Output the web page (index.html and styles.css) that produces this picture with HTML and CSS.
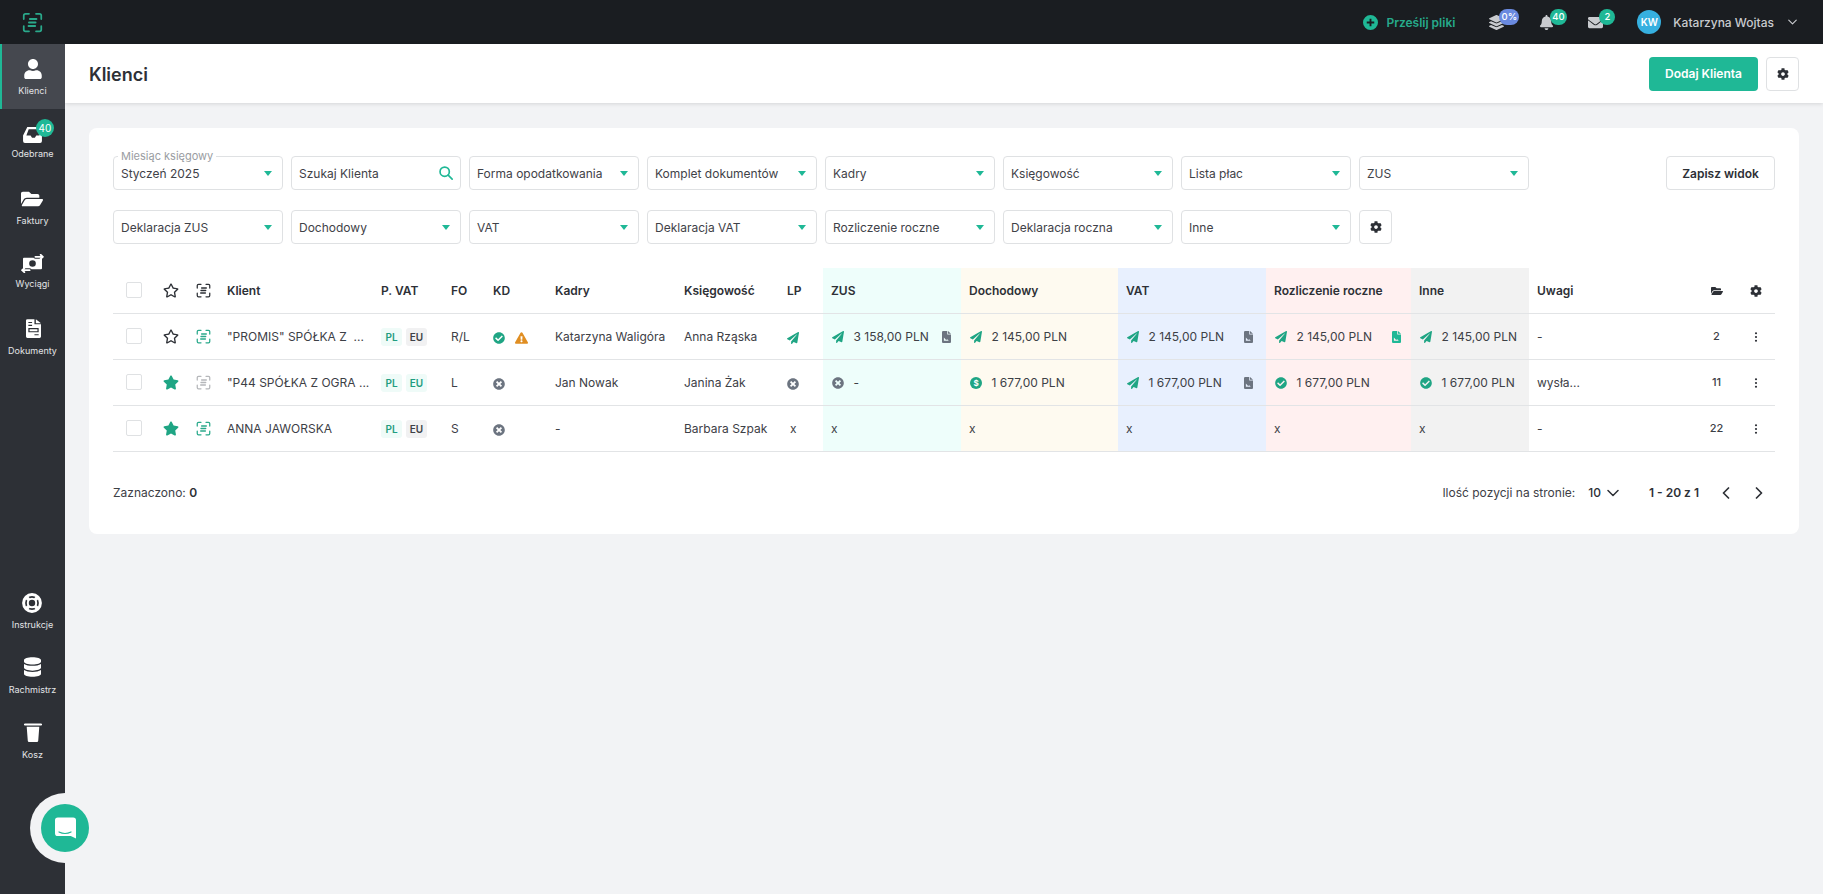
FILE: index.html
```html
<!DOCTYPE html>
<html lang="pl">
<head>
    <meta charset="utf-8">
    <title>Klienci</title>
    <link rel="stylesheet" href="styles.css">
</head>
<body>
    <svg class="sprite">
        <symbol id="i-logo" viewBox="0 0 24 24"><g fill="none" stroke="currentColor" stroke-width="2" stroke-linecap="round"><path d="M2 8V4a2 2 0 0 1 2-2h4M16 2h4a2 2 0 0 1 2 2v4M22 16v4a2 2 0 0 1-2 2h-4M8 22H4a2 2 0 0 1-2-2v-4"/><path stroke-width="2.2" d="M9 8h7.5M8 12h7.5M7.500 16h7.500"/></g></symbol>
        <symbol id="i-user" viewBox="0 0 448 512"><path d="M224 256c70.7 0 128-57.3 128-128S294.7 0 224 0 96 57.3 96 128s57.3 128 128 128zm89.6 32h-16.7c-22.2 10.2-46.9 16-72.9 16s-50.6-5.8-72.9-16h-16.7C60.2 288 0 348.2 0 422.4V464c0 26.5 21.5 48 48 48h352c26.5 0 48-21.500 48-48v-41.600c0-74.200-60.200-134.400-134.400-134.400z"/></symbol>
        <symbol id="i-inbox" viewBox="0 0 20 18"><path fill-rule="evenodd" d="M4.500 1h12l3.500 9v6a2 2 0 0 1-2 2H2a2 2 0 0 1-2-2v-6zM6 3.500L3.500 10h4.500l1.500 2.500h3L14 10h3.500l-2.500-6.500z"/></symbol>
        <symbol id="i-folder" viewBox="0 0 576 512"><path d="M572.694 292.093L500.27 416.248A63.997 63.997 0 0 1 444.989 448H45.025c-18.523 0-30.064-20.093-20.731-36.093l72.424-124.155A64 64 0 0 1 152 256h399.964c18.523 0 30.064 20.093 20.73 36.093zM152 224h328v-48c0-26.51-21.49-48-48-48H272l-64-64H48C21.49 64 0 85.49 0 112v278.046l69.077-118.418C86.214 242.25 117.989 224 152 224z"/></symbol>
        <symbol id="i-money" viewBox="0 0 24 20"><path fill-rule="evenodd" d="M3 4h18a1 1 0 0 1 1 1v10a1 1 0 0 1-1 1H3a1 1 0 0 1-1-1V5a1 1 0 0 1 1-1zM12 6.500a3.500 3.500 0 1 0 0 7 3.500 3.500 0 0 0 0-7z"/><g fill="none" stroke-linecap="round" stroke-linejoin="round"><path stroke="#2d3036" stroke-width="4" d="M15 3h8M1 17h8"/><path stroke="currentColor" stroke-width="1.800" d="M15 3h8M20.500 .8L23 3l-2.500 2.200M1 17h8M3.500 14.800L1 17l2.500 2.200"/></g></symbol>
        <symbol id="i-doc" viewBox="0 0 16 20"><path fill-rule="evenodd" d="M1.500 0H9v5.500h7v13a1.500 1.500 0 0 1-1.500 1.500h-13A1.500 1.500 0 0 1 0 18.500v-17A1.500 1.500 0 0 1 1.500 0zM10.500 0L16 4.300h-5.500zM2.500 3v1.200h4V3zM2.500 6v1.200h4V6zM2.500 9.500v4.500h11V9.500zM3.800 10.800h8.400v2H3.800zM9 16v1.200h4.500V16z"/></symbol>
        <symbol id="i-ring" viewBox="0 0 20 20"><g fill="none" stroke="currentColor"><circle cx="10" cy="10" r="8.400" stroke-width="3"/><circle cx="10" cy="10" r="4.200" stroke-width="2"/><path stroke-width="3.600" d="M4.600 4.600l2.200 2.200M15.400 4.600l-2.200 2.200M4.600 15.400l2.200-2.200M15.400 15.400l-2.200-2.200"/></g></symbol>
        <symbol id="i-db" viewBox="0 0 448 512"><path d="M448 73.143v45.714C448 159.143 347.667 192 224 192S0 159.143 0 118.857V73.143C0 32.857 100.333 0 224 0s224 32.857 224 73.143zM448 176v102.857C448 319.143 347.667 352 224 352S0 319.143 0 278.857V176c48.125 33.143 136.208 48.572 224 48.572S399.874 209.143 448 176zm0 160v102.857C448 479.143 347.667 512 224 512S0 479.143 0 438.857V336c48.125 33.143 136.208 48.572 224 48.572S399.874 369.143 448 336z"/></symbol>
        <symbol id="i-trash" viewBox="0 0 20 22"><path d="M1 1.500h18a1 1 0 0 1 0 2.200H1a1 1 0 0 1 0-2.200zM3 5.200h14l-1.200 15.400a1.500 1.500 0 0 1-1.500 1.400H5.700a1.500 1.500 0 0 1-1.500-1.400z"/></symbol>
        <symbol id="i-chat" viewBox="0 0 22 22"><path d="M3 0h16a3 3 0 0 1 3 3v19l-5.500-2.500H3a3 3 0 0 1-3-3V3a3 3 0 0 1 3-3z"/></symbol>
        <symbol id="i-plus" viewBox="0 0 16 16"><path fill-rule="evenodd" d="M8 0a8 8 0 1 1 0 16A8 8 0 0 1 8 0zM7 4v3H4v2h3v3h2V9h3V7H9V4z"/></symbol>
        <symbol id="i-layers" viewBox="0 0 512 512"><path d="M12.41 148.02l232.94 105.67c6.8 3.09 14.49 3.09 21.29 0l232.94-105.67c16.55-7.51 16.55-32.52 0-40.03L266.65 2.31a25.607 25.607 0 0 0-21.29 0L12.41 107.98c-16.55 7.51-16.55 32.53 0 40.04zm487.18 88.28l-58.09-26.33-161.64 73.27c-7.56 3.43-15.59 5.17-23.86 5.17s-16.29-1.74-23.86-5.17L70.51 209.97l-58.1 26.33c-16.55 7.5-16.55 32.5 0 40l232.94 105.59c6.8 3.08 14.49 3.08 21.29 0L499.59 276.3c16.55-7.5 16.55-32.5 0-40zm0 127.8l-57.87-26.23-161.86 73.37c-7.56 3.43-15.59 5.17-23.86 5.17s-16.29-1.74-23.86-5.17L70.29 337.87 12.41 364.1c-16.55 7.5-16.55 32.5 0 40l232.94 105.59c6.8 3.08 14.49 3.08 21.29 0L499.59 404.1c16.55-7.5 16.55-32.5 0-40z"/></symbol>
        <symbol id="i-bell" viewBox="0 0 448 512"><path d="M224 512c35.32 0 63.97-28.65 63.97-64H160.03c0 35.35 28.65 64 63.97 64zm215.39-149.71c-19.32-20.76-55.47-51.99-55.47-154.29 0-77.7-54.48-139.9-127.94-155.16V32c0-17.67-14.32-32-31.98-32s-31.98 14.33-31.98 32v20.84C118.56 68.1 64.08 130.3 64.08 208c0 102.3-36.15 133.53-55.47 154.29-6 6.45-8.66 14.16-8.61 21.71.11 16.4 12.98 32 32.1 32h383.8c19.12 0 32-15.6 32.1-32 .05-7.55-2.61-15.27-8.61-21.71z"/></symbol>
        <symbol id="i-mail" viewBox="0 0 512 512"><path d="M502.3 190.8c3.9-3.1 9.7-.2 9.7 4.7V400c0 26.5-21.5 48-48 48H48c-26.5 0-48-21.5-48-48V195.6c0-5 5.7-7.8 9.7-4.7 22.4 17.4 52.1 39.5 154.1 113.6 21.1 15.4 56.7 47.8 92.2 47.6 35.7.3 71.2-32.9 92.3-47.6 102-74.1 131.6-96.3 154-113.7zM256 320c23.2.4 56.6-29.2 73.4-41.4 132.7-96.3 142.8-104.7 173.4-128.7 5.8-4.5 9.2-11.5 9.2-18.9v-19c0-26.5-21.5-48-48-48H48C21.5 64 0 85.5 0 112v19c0 7.4 3.4 14.3 9.2 18.9 30.6 23.9 40.7 32.4 173.4 128.7 16.8 12.2 50.2 41.8 73.4 41.4z"/></symbol>
        <symbol id="i-cog" viewBox="0 0 512 512"><path d="M487.4 315.7l-42.6-24.6c4.3-23.2 4.3-47 0-70.2l42.6-24.6c4.9-2.8 7.1-8.6 5.5-14-11.1-35.6-30-67.8-54.7-94.6-3.8-4.1-10-5.1-14.8-2.3L380.8 110c-17.9-15.4-38.5-27.3-60.8-35.1V25.8c0-5.6-3.9-10.5-9.4-11.7-36.7-8.2-74.3-7.8-109.2 0-5.5 1.2-9.4 6.1-9.4 11.7V75c-22.2 7.9-42.8 19.8-60.8 35.1L88.7 85.5c-4.9-2.8-11-1.9-14.8 2.3-24.7 26.7-43.6 58.9-54.7 94.6-1.7 5.4.6 11.2 5.5 14L67.3 221c-4.3 23.2-4.3 47 0 70.2l-42.6 24.6c-4.9 2.8-7.1 8.6-5.5 14 11.1 35.6 30 67.8 54.7 94.6 3.8 4.1 10 5.1 14.8 2.3l42.6-24.6c17.9 15.4 38.5 27.3 60.8 35.1v49.2c0 5.6 3.9 10.5 9.4 11.7 36.7 8.2 74.3 7.8 109.2 0 5.5-1.2 9.4-6.1 9.4-11.7v-49.2c22.2-7.9 42.8-19.8 60.8-35.1l42.6 24.6c4.9 2.8 11 1.9 14.8-2.3 24.7-26.7 43.6-58.9 54.7-94.6 1.5-5.5-.7-11.3-5.6-14.1zM256 336c-44.1 0-80-35.9-80-80s35.9-80 80-80 80 35.9 80 80-35.9 80-80 80z"/></symbol>
        <symbol id="i-star" viewBox="0 0 576 512"><path d="M259.3 17.8L194 150.2 47.9 171.5c-26.2 3.8-36.7 36.1-17.7 54.6l105.7 103-25 145.5c-4.5 26.3 23.2 46 46.4 33.7L288 439.6l130.7 68.7c23.2 12.2 50.9-7.4 46.4-33.7l-25-145.5 105.7-103c19-18.5 8.5-50.8-17.7-54.6L382 150.2 316.7 17.8c-11.7-23.6-45.6-23.9-57.4 0z"/></symbol>
        <symbol id="i-star-o" viewBox="0 0 576 512"><path d="M528.1 171.5L382 150.2 316.7 17.8c-11.7-23.6-45.6-23.9-57.4 0L194 150.2 47.9 171.5c-26.2 3.8-36.7 36.1-17.7 54.6l105.7 103-25 145.5c-4.5 26.3 23.2 46 46.4 33.7L288 439.6l130.7 68.7c23.2 12.2 50.9-7.4 46.4-33.7l-25-145.5 105.7-103c19-18.5 8.5-50.8-17.7-54.6zM388.6 312.3l23.7 138.4L288 385.4l-124.3 65.3 23.7-138.4-100.6-98 139-20.2 62.2-126 62.2 126 139 20.2-100.6 98z"/></symbol>
        <symbol id="i-plane" viewBox="0 0 512 512"><path d="M476 3.2L12.5 270.6c-18.1 10.4-15.8 35.6 2.2 43.2L121 358.4l287.3-253.2c5.5-4.9 13.3 2.6 8.6 8.3L176 407v80.5c0 23.6 28.5 32.9 42.5 15.8L282 426l124.6 52.2c14.2 6 30.4-2.9 33-18.2l72-432C515 7.8 493.3-6.8 476 3.2z"/></symbol>
        <symbol id="i-check" viewBox="0 0 512 512"><path d="M504 256c0 136.967-111.033 248-248 248S8 392.967 8 256 119.033 8 256 8s248 111.033 248 248zM227.314 387.314l184-184c6.248-6.248 6.248-16.379 0-22.627l-22.627-22.627c-6.248-6.249-16.379-6.249-22.628 0L216 308.118l-70.059-70.059c-6.248-6.248-16.379-6.248-22.628 0l-22.627 22.627c-6.248 6.248-6.248 16.379 0 22.627l104 104c6.249 6.249 16.379 6.249 22.628.001z"/></symbol>
        <symbol id="i-times" viewBox="0 0 512 512"><path d="M256 8C119 8 8 119 8 256s111 248 248 248 248-111 248-248S393 8 256 8zm121.6 313.1c4.7 4.7 4.7 12.3 0 17L338 377.6c-4.7 4.7-12.3 4.7-17 0L256 312l-65.1 65.6c-4.7 4.7-12.3 4.7-17 0L134.4 338c-4.7-4.7-4.7-12.3 0-17l65.6-65-65.6-65.1c-4.7-4.7-4.7-12.3 0-17l39.6-39.6c4.7-4.7 12.3-4.7 17 0l65 65.7 65.1-65.6c4.7-4.7 12.3-4.7 17 0l39.6 39.6c4.7 4.7 4.7 12.3 0 17L312 256l65.6 65.1z"/></symbol>
        <symbol id="i-warn" viewBox="0 0 576 512"><path d="M569.517 440.013C587.975 472.007 564.806 512 527.94 512H48.054c-36.937 0-59.999-40.055-41.577-71.987L246.423 23.985c18.467-32.009 64.72-31.951 83.154 0l239.94 416.028zM288 354c-25.405 0-46 20.595-46 46s20.595 46 46 46 46-20.595 46-46-20.595-46-46-46zm-43.673-165.346l7.418 136c.347 6.364 5.609 11.346 11.982 11.346h48.546c6.373 0 11.635-4.982 11.982-11.346l7.418-136c.375-6.874-5.098-12.654-11.982-12.654h-63.383c-6.884 0-12.356 5.78-11.981 12.654z"/></symbol>
        <symbol id="i-file" viewBox="0 0 12 16"><path fill-rule="evenodd" d="M1.500 0H7v4.500h5v10a1.500 1.500 0 0 1-1.500 1.500h-9A1.500 1.500 0 0 1 0 14.500v-13A1.500 1.500 0 0 1 1.500 0zM8 0l4 3.500H8zM2.500 8.500v4.500h6.500l-2-2-1.500 1z"/></symbol>
        <symbol id="i-search" viewBox="0 0 16 16"><g fill="none" stroke="currentColor" stroke-width="1.900" stroke-linecap="round"><circle cx="6.500" cy="6.500" r="5.300"/><path d="M10.500 10.500l4.500 4.500"/></g></symbol>
        <symbol id="i-down" viewBox="0 0 12 8"><path fill="none" stroke="currentColor" stroke-width="1.500" stroke-linecap="round" stroke-linejoin="round" d="M1 1.500l5 5 5-5"/></symbol>
        <symbol id="i-left" viewBox="0 0 8 12"><path fill="none" stroke="currentColor" stroke-width="1.700" stroke-linecap="round" stroke-linejoin="round" d="M6.500 1l-5 5 5 5"/></symbol>
        <symbol id="i-right" viewBox="0 0 8 12"><path fill="none" stroke="currentColor" stroke-width="1.700" stroke-linecap="round" stroke-linejoin="round" d="M1.500 1l5 5-5 5"/></symbol>
        <symbol id="i-dots" viewBox="0 0 4 12"><circle cx="2" cy="1.500" r="1.300"/><circle cx="2" cy="6" r="1.300"/><circle cx="2" cy="10.500" r="1.300"/></symbol>
    </svg>

    <header class="topbar">
        <div class="topbar_logo"><svg class="logo_icon"><use href="#i-logo"/></svg></div>
        <div class="upload"><svg class="upload_icon"><use href="#i-plus"/></svg>Prześlij pliki</div>
        <div class="notify notify_layers"><svg><use href="#i-layers"/></svg><span class="notify_badge badge_blue">0%</span></div>
        <div class="notify notify_bell"><svg><use href="#i-bell"/></svg><span class="notify_badge">40</span></div>
        <div class="notify notify_mail"><svg><use href="#i-mail"/></svg><span class="notify_badge">2</span></div>
        <div class="avatar">KW</div>
        <div class="user_name">Katarzyna Wojtas</div>
        <svg class="user_chevron"><use href="#i-down"/></svg>
    </header>

    <div class="layout">
        <nav class="sidebar">
            <div class="nav_group">
                <a class="nav_item active"><svg class="nav_icon icon_user"><use href="#i-user"/></svg><span>Klienci</span></a>
                <a class="nav_item nav_item_up"><span class="nav_badge">40</span><svg class="nav_icon icon_inbox"><use href="#i-inbox"/></svg><span>Odebrane</span></a>
                <a class="nav_item"><svg class="nav_icon icon_folder"><use href="#i-folder"/></svg><span>Faktury</span></a>
                <a class="nav_item nav_item_up"><svg class="nav_icon icon_money"><use href="#i-money"/></svg><span>Wyciągi</span></a>
                <a class="nav_item"><svg class="nav_icon icon_doc"><use href="#i-doc"/></svg><span>Dokumenty</span></a>
            </div>
            <div class="nav_group">
                <a class="nav_item"><svg class="nav_icon icon_ring"><use href="#i-ring"/></svg><span>Instrukcje</span></a>
                <a class="nav_item"><svg class="nav_icon icon_db"><use href="#i-db"/></svg><span>Rachmistrz</span></a>
                <a class="nav_item"><svg class="nav_icon icon_trash"><use href="#i-trash"/></svg><span>Kosz</span></a>
            </div>
        </nav>

        <main class="content">
            <div class="page_head">
                <h1>Klienci</h1>
                <button class="btn_primary" type="button">Dodaj Klienta</button>
                <button class="btn_icon" type="button"><svg><use href="#i-cog"/></svg></button>
            </div>

            <section class="card">
                <div class="filter_row">
                    <div class="field"><span class="field_label">Miesiąc księgowy</span>Styczeń 2025<i class="caret"></i></div>
                    <div class="field">Szukaj Klienta<svg class="search_icon"><use href="#i-search"/></svg></div>
                    <div class="field">Forma opodatkowania<i class="caret"></i></div>
                    <div class="field">Komplet dokumentów<i class="caret"></i></div>
                    <div class="field">Kadry<i class="caret"></i></div>
                    <div class="field">Księgowość<i class="caret"></i></div>
                    <div class="field">Lista płac<i class="caret"></i></div>
                    <div class="field">ZUS<i class="caret"></i></div>
                    <button class="btn_save" type="button">Zapisz widok</button>
                </div>
                <div class="filter_row">
                    <div class="field">Deklaracja ZUS<i class="caret"></i></div>
                    <div class="field">Dochodowy<i class="caret"></i></div>
                    <div class="field">VAT<i class="caret"></i></div>
                    <div class="field">Deklaracja VAT<i class="caret"></i></div>
                    <div class="field">Rozliczenie roczne<i class="caret"></i></div>
                    <div class="field">Deklaracja roczna<i class="caret"></i></div>
                    <div class="field">Inne<i class="caret"></i></div>
                    <button class="btn_icon" type="button"><svg><use href="#i-cog"/></svg></button>
                </div>

                <table class="clients">
                    <colgroup>
                        <col class="w_check"><col class="w_star"><col class="w_star"><col class="w_client"><col class="w_pvat">
                        <col class="w_fo"><col class="w_kd"><col class="w_kadry"><col class="w_ksieg"><col class="w_lp">
                        <col class="w_zus"><col class="w_doch"><col class="w_vat"><col class="w_rozl"><col class="w_inne">
                        <col class="w_uwagi"><col class="w_act"><col class="w_act">
                    </colgroup>
                    <thead>
                        <tr>
                            <th class="td_check"><span class="checkbox"></span></th>
                            <th class="td_center"><svg class="star"><use href="#i-star-o"/></svg></th>
                            <th class="td_center"><svg class="scan scan_dark"><use href="#i-logo"/></svg></th>
                            <th>Klient</th><th>P. VAT</th><th>FO</th><th>KD</th><th>Kadry</th><th>Księgowość</th><th>LP</th>
                            <th class="bg_zus">ZUS</th><th class="bg_doch">Dochodowy</th><th class="bg_vat">VAT</th>
                            <th class="bg_rozl">Rozliczenie roczne</th><th class="bg_inne">Inne</th><th>Uwagi</th>
                            <th class="td_center"><svg class="head_icon"><use href="#i-folder"/></svg></th>
                            <th class="td_center"><svg class="head_icon"><use href="#i-cog"/></svg></th>
                        </tr>
                    </thead>
                    <tbody>
                        <tr>
                            <td class="td_check"><span class="checkbox"></span></td>
                            <td class="td_center"><svg class="star"><use href="#i-star-o"/></svg></td>
                            <td class="td_center"><svg class="scan"><use href="#i-logo"/></svg></td>
                            <td class="td_name">"PROMIS" SPÓŁKA Z &nbsp;...</td>
                            <td><span class="tag tag_on">PL</span><span class="tag">EU</span></td>
                            <td>R/L</td>
                            <td><svg class="st st_green"><use href="#i-check"/></svg><svg class="st st_warn"><use href="#i-warn"/></svg></td>
                            <td>Katarzyna Waligóra</td>
                            <td>Anna Rząska</td>
                            <td><svg class="st st_green"><use href="#i-plane"/></svg></td>
                            <td class="bg_zus"><div class="money"><svg class="st st_green"><use href="#i-plane"/></svg>3 158,00 PLN<svg class="file"><use href="#i-file"/></svg></div></td>
                            <td class="bg_doch"><div class="money"><svg class="st st_green"><use href="#i-plane"/></svg>2 145,00 PLN</div></td>
                            <td class="bg_vat"><div class="money money_vat"><svg class="st st_green"><use href="#i-plane"/></svg>2 145,00 PLN<svg class="file"><use href="#i-file"/></svg></div></td>
                            <td class="bg_rozl"><div class="money"><svg class="st st_green"><use href="#i-plane"/></svg>2 145,00 PLN<svg class="file file_green"><use href="#i-file"/></svg></div></td>
                            <td class="bg_inne"><div class="money"><svg class="st st_green"><use href="#i-plane"/></svg>2 145,00 PLN</div></td>
                            <td>-</td>
                            <td class="td_center td_count">2</td>
                            <td class="td_center"><svg class="dots"><use href="#i-dots"/></svg></td>
                        </tr>
                        <tr>
                            <td class="td_check"><span class="checkbox"></span></td>
                            <td class="td_center"><svg class="star star_on"><use href="#i-star"/></svg></td>
                            <td class="td_center"><svg class="scan scan_off"><use href="#i-logo"/></svg></td>
                            <td class="td_name">"P44 SPÓŁKA Z OGRA ...</td>
                            <td><span class="tag tag_on">PL</span><span class="tag tag_on">EU</span></td>
                            <td>L</td>
                            <td><svg class="st st_gray"><use href="#i-times"/></svg></td>
                            <td>Jan Nowak</td>
                            <td>Janina Żak</td>
                            <td><svg class="st st_gray"><use href="#i-times"/></svg></td>
                            <td class="bg_zus"><div class="money"><svg class="st st_gray"><use href="#i-times"/></svg>-</div></td>
                            <td class="bg_doch"><div class="money"><span class="dollar">$</span>1 677,00 PLN</div></td>
                            <td class="bg_vat"><div class="money money_vat"><svg class="st st_green"><use href="#i-plane"/></svg>1 677,00 PLN<svg class="file"><use href="#i-file"/></svg></div></td>
                            <td class="bg_rozl"><div class="money"><svg class="st st_green"><use href="#i-check"/></svg>1 677,00 PLN</div></td>
                            <td class="bg_inne"><div class="money"><svg class="st st_green"><use href="#i-check"/></svg>1 677,00 PLN</div></td>
                            <td>wysła...</td>
                            <td class="td_center td_count">11</td>
                            <td class="td_center"><svg class="dots"><use href="#i-dots"/></svg></td>
                        </tr>
                        <tr>
                            <td class="td_check"><span class="checkbox"></span></td>
                            <td class="td_center"><svg class="star star_on"><use href="#i-star"/></svg></td>
                            <td class="td_center"><svg class="scan"><use href="#i-logo"/></svg></td>
                            <td class="td_name">ANNA JAWORSKA</td>
                            <td><span class="tag tag_on">PL</span><span class="tag">EU</span></td>
                            <td>S</td>
                            <td><svg class="st st_gray"><use href="#i-times"/></svg></td>
                            <td>-</td>
                            <td>Barbara Szpak</td>
                            <td class="td_lp">x</td>
                            <td class="bg_zus">x</td>
                            <td class="bg_doch">x</td>
                            <td class="bg_vat">x</td>
                            <td class="bg_rozl">x</td>
                            <td class="bg_inne">x</td>
                            <td>-</td>
                            <td class="td_center td_count">22</td>
                            <td class="td_center"><svg class="dots"><use href="#i-dots"/></svg></td>
                        </tr>
                    </tbody>
                </table>

                <div class="table_foot">
                    <div>Zaznaczono: <b>0</b></div>
                    <div class="pager">
                        <span>Ilość pozycji na stronie:</span>
                        <span class="pager_size">10<svg><use href="#i-down"/></svg></span>
                        <b class="pager_range">1 - 20 z 1</b>
                        <svg class="pager_arrow"><use href="#i-left"/></svg>
                        <svg class="pager_arrow"><use href="#i-right"/></svg>
                    </div>
                </div>
            </section>
        </main>
    </div>

    <div class="chat_halo"><div class="chat_btn"><svg class="chat_icon"><use href="#i-chat"/></svg><svg class="chat_smile" viewBox="0 0 14 4"><path d="M1 1q6 3 12 0" fill="none" stroke="#1fb896" stroke-width="1.200" stroke-linecap="round"/></svg></div></div>
</body>
</html>
```
FILE: styles.css
```css
* {
    box-sizing: border-box;
}
body {
    margin: 0;
    width: 1823px;
    height: 894px;
    overflow: hidden;
    background-color: #f2f3f5;
    font-family: "Inter", "Liberation Sans", sans-serif;
    font-size: 12px;
    color: #3d4046;
}
button {
    font-family: inherit;
    cursor: pointer;
}
.sprite {
    display: none;
}

/* top bar */
.topbar {
    height: 44px;
    background-color: #1a1d21;
    display: flex;
    align-items: center;
    color: #c9cbcf;
}
.topbar_logo {
    width: 65px;
    display: flex;
    justify-content: center;
}
.logo_icon {
    width: 21px;
    height: 21px;
    color: #2aa98b;
}
.upload {
    margin-left: auto;
    display: flex;
    align-items: center;
    gap: 8px;
    color: #26a98a;
    font-weight: 600;
}
.upload_icon {
    width: 15px;
    height: 15px;
    fill: #1fb896;
}
.notify {
    position: relative;
    display: flex;
    color: #c9cbcf;
}
.notify svg {
    width: 15px;
    height: 15px;
    fill: currentColor;
}
.notify_layers {
    margin-left: 34px;
}
.notify_bell {
    margin-left: 35px;
}
.notify_mail {
    margin-left: 34px;
}
.notify_badge {
    position: absolute;
    left: 11px;
    top: -6px;
    min-width: 16px;
    height: 16px;
    padding: 0 2px;
    border-radius: 8px;
    background-color: #1fb896;
    color: #fff;
    font-size: 9.5px;
    font-weight: 500;
    line-height: 16px;
    text-align: center;
}
.badge_blue {
    background-color: #6a8ae0;
    left: 10px;
    width: 20px;
}
.avatar {
    margin-left: 34px;
    width: 24px;
    height: 24px;
    border-radius: 50%;
    background-color: #36b0e0;
    color: #fff;
    font-size: 10px;
    font-weight: 600;
    line-height: 24px;
    text-align: center;
}
.user_name {
    margin-left: 12px;
    font-weight: 500;
}
.user_chevron {
    width: 9px;
    height: 6px;
    margin: 0 26px 0 14px;
    color: #c9cbcf;
}

/* side menu */
.layout {
    display: flex;
    height: 850px;
}
.sidebar {
    width: 65px;
    flex: none;
    background-color: #2d3036;
    display: flex;
    flex-direction: column;
    justify-content: space-between;
    padding-bottom: 121px;
}
.nav_item {
    position: relative;
    height: 65px;
    display: flex;
    flex-direction: column;
    align-items: center;
    color: #e3e4e6;
    font-size: 9px;
    line-height: 12px;
}
.nav_item span:last-child {
    position: absolute;
    top: 41px;
    left: 0;
    right: 0;
    text-align: center;
}
.nav_item_up span:last-child {
    top: 39px;
}
.nav_item.active {
    background-color: #45484f;
    box-shadow: inset 2px 0 0 #1fb896;
}
.nav_icon {
    position: absolute;
    fill: #fff;
    color: #fff;
}
.icon_user { top: 15px; width: 18px; height: 20px; left: 24px; }
.icon_inbox { top: 17px; width: 19px; height: 17px; left: 23px; }
.icon_folder { top: 15px; width: 22px; height: 20px; left: 21px; }
.icon_money { top: 15px; width: 23px; height: 19px; left: 21px; }
.icon_doc { top: 15px; width: 15px; height: 19px; left: 26px; }
.icon_ring { top: 15px; width: 20px; height: 20px; left: 22px; }
.icon_db { top: 14px; width: 17px; height: 20px; left: 24px; }
.icon_trash { top: 14px; width: 18px; height: 20px; left: 24px; }
.nav_badge {
    position: absolute;
    top: 10px;
    left: 36px;
    width: 18px;
    height: 18px;
    border-radius: 50%;
    background-color: #1fb896;
    color: #fff;
    font-size: 10px;
    line-height: 18px;
    text-align: center;
    z-index: 1;
}

/* page head */
.content {
    flex: 1;
}
.page_head {
    height: 59px;
    background-color: #fff;
    box-shadow: 0 1px 4px rgba(0, 0, 0, 0.12);
    display: flex;
    align-items: center;
    padding: 0 24px;
    gap: 8px;
}
h1 {
    margin: 1px auto 0 0;
    font-size: 18px;
    font-weight: 600;
    color: #2d3036;
}
.btn_primary {
    width: 109px;
    height: 34px;
    border: none;
    border-radius: 4px;
    background-color: #1fb896;
    color: #fff;
    font-size: 12px;
    font-weight: 600;
}
.btn_icon {
    width: 33px;
    height: 34px;
    background-color: #fff;
    border: 1px solid #dfe1e3;
    border-radius: 4px;
    padding: 0;
    display: flex;
    align-items: center;
    justify-content: center;
}
.btn_icon svg {
    width: 12px;
    height: 12px;
    fill: #2d3036;
}

/* filters */
.card {
    width: 1710px;
    height: 406px;
    margin: 25px 24px 0;
    padding: 28px 24px 0;
    background-color: #fff;
    border-radius: 8px;
}
.filter_row {
    display: flex;
    gap: 8px;
    margin-bottom: 20px;
}
.field {
    position: relative;
    width: 170px;
    height: 34px;
    padding: 0 7px;
    border: 1px solid #dfe1e3;
    border-radius: 4px;
    display: flex;
    align-items: center;
    color: #3f4248;
}
.field_label {
    position: absolute;
    top: -7px;
    left: 4px;
    padding: 0 3px;
    background-color: #fff;
    font-size: 11px;
    line-height: 13px;
    color: #9a9da2;
}
.caret {
    position: absolute;
    right: 10px;
    top: 14px;
    border-left: 4.500px solid transparent;
    border-right: 4.500px solid transparent;
    border-top: 5px solid #1fb896;
}
.search_icon {
    position: absolute;
    right: 7px;
    top: 9px;
    width: 14px;
    height: 14px;
    color: #1fb896;
}
.btn_save {
    margin-left: auto;
    margin-right: 0;
    width: 109px;
    height: 34px;
    background-color: #fff;
    border: 1px solid #dfe1e3;
    border-radius: 4px;
    color: #2d3036;
    font-size: 12px;
    font-weight: 600;
}

/* table */
.clients {
    width: 1662px;
    margin-top: 24px;
    border-collapse: collapse;
    table-layout: fixed;
}
.w_check { width: 42px; }
.w_star { width: 32px; }
.w_client { width: 154px; }
.w_pvat { width: 70px; }
.w_fo { width: 42px; }
.w_kd { width: 62px; }
.w_kadry { width: 129px; }
.w_ksieg { width: 103px; }
.w_lp { width: 44px; }
.w_zus { width: 138px; }
.w_doch { width: 157px; }
.w_vat { width: 148px; }
.w_rozl { width: 145px; }
.w_inne { width: 118px; }
.w_uwagi { width: 168px; }
.w_act { width: 39px; }
.clients th,
.clients td {
    height: 46px;
    padding: 1px 8px 0;
    border-bottom: 1px solid #e2e4e6;
    text-align: left;
    white-space: nowrap;
    overflow: hidden;
    vertical-align: middle;
}
.clients th {
    height: 45px;
    padding-top: 0;
    font-weight: 600;
    color: #2d3036;
}
.clients svg {
    vertical-align: middle;
}
.clients .td_check {
    padding: 0 0 0 13px;
}
.clients .td_center {
    padding: 0;
    text-align: center;
}
.td_count {
    font-size: 11px;
    font-weight: 500;
}
.clients .td_lp {
    padding-left: 11px;
}
.checkbox {
    display: block;
    width: 16px;
    height: 16px;
    border: 1px solid #dfe1e3;
    border-radius: 2px;
}
.star {
    width: 16px;
    height: 15px;
    fill: #2d3036;
}
.star_on {
    fill: #1fa584;
}
.scan {
    width: 15px;
    height: 15px;
    color: #2aa98b;
}
.scan_dark {
    color: #2d3036;
}
.scan_off {
    color: #b5b7ba;
}
.head_icon {
    width: 12px;
    height: 12px;
    fill: #2d3036;
}
.dots {
    width: 4px;
    height: 10px;
    fill: #2d3036;
}
.bg_zus { background-color: #eefefb; }
.bg_doch { background-color: #fefaf0; }
.bg_vat { background-color: #e8f0fe; }
.bg_rozl { background-color: #fff0f0; }
.bg_inne { background-color: #f2f2f2; }
.tag {
    display: inline-block;
    width: 21px;
    height: 18px;
    margin-right: 4px;
    border-radius: 3px;
    background-color: #f1f1f2;
    color: #3e4147;
    font-size: 10px;
    font-weight: 600;
    line-height: 18px;
    text-align: center;
}
.tag_on {
    background-color: #effbf8;
    color: #1f9d80;
}
.st {
    width: 12px;
    height: 12px;
}
.st_green {
    fill: #1fa584;
}
.st_gray {
    fill: #6c7480;
}
.st_warn {
    width: 13px;
    margin-left: 10px;
    fill: #e08e22;
}
.money {
    display: flex;
    align-items: center;
    gap: 9.500px;
    padding-left: 1px;
}
.money .st {
    flex: none;
}
.file {
    flex: none;
    width: 9px;
    height: 12px;
    margin-left: auto;
    margin-right: 2px;
    fill: #6c7480;
}
.money_vat .file {
    margin-right: 5px;
}
.file_green {
    fill: #1fb896;
}
.dollar {
    width: 12px;
    height: 12px;
    border-radius: 50%;
    background-color: #1fa584;
    color: #fff;
    font-size: 8px;
    font-weight: 700;
    line-height: 12px;
    text-align: center;
    flex: none;
}

/* footer of the table */
.table_foot {
    margin-top: 25px;
    height: 32px;
    display: flex;
    align-items: center;
    justify-content: space-between;
}
.table_foot b {
    font-weight: 600;
    color: #2d3036;
}
.pager {
    display: flex;
    align-items: center;
}
.pager_size {
    display: flex;
    align-items: center;
    gap: 6px;
    margin-left: 13px;
    font-weight: 500;
    color: #2d3036;
}
.pager_size svg {
    width: 12px;
    height: 8px;
}
.pager_range {
    margin-left: 30px;
}
.pager_arrow {
    width: 8px;
    height: 12px;
    margin-left: 23px;
    color: #2d3036;
}
.pager_arrow:last-child {
    margin-right: 12px;
    margin-left: 25px;
}

/* chat widget */
.chat_halo {
    position: absolute;
    left: 30px;
    top: 793px;
    width: 70px;
    height: 70px;
    border-radius: 50%;
    background-color: #f2f3f5;
    display: flex;
    align-items: center;
    justify-content: center;
}
.chat_btn {
    position: relative;
    width: 48px;
    height: 48px;
    border-radius: 50%;
    background-color: #1fb896;
    display: flex;
    align-items: center;
    justify-content: center;
}
.chat_icon {
    width: 21px;
    height: 22px;
    fill: #fff;
}
.chat_smile {
    position: absolute;
    left: 17px;
    top: 27px;
    width: 14px;
    height: 4px;
}
```
